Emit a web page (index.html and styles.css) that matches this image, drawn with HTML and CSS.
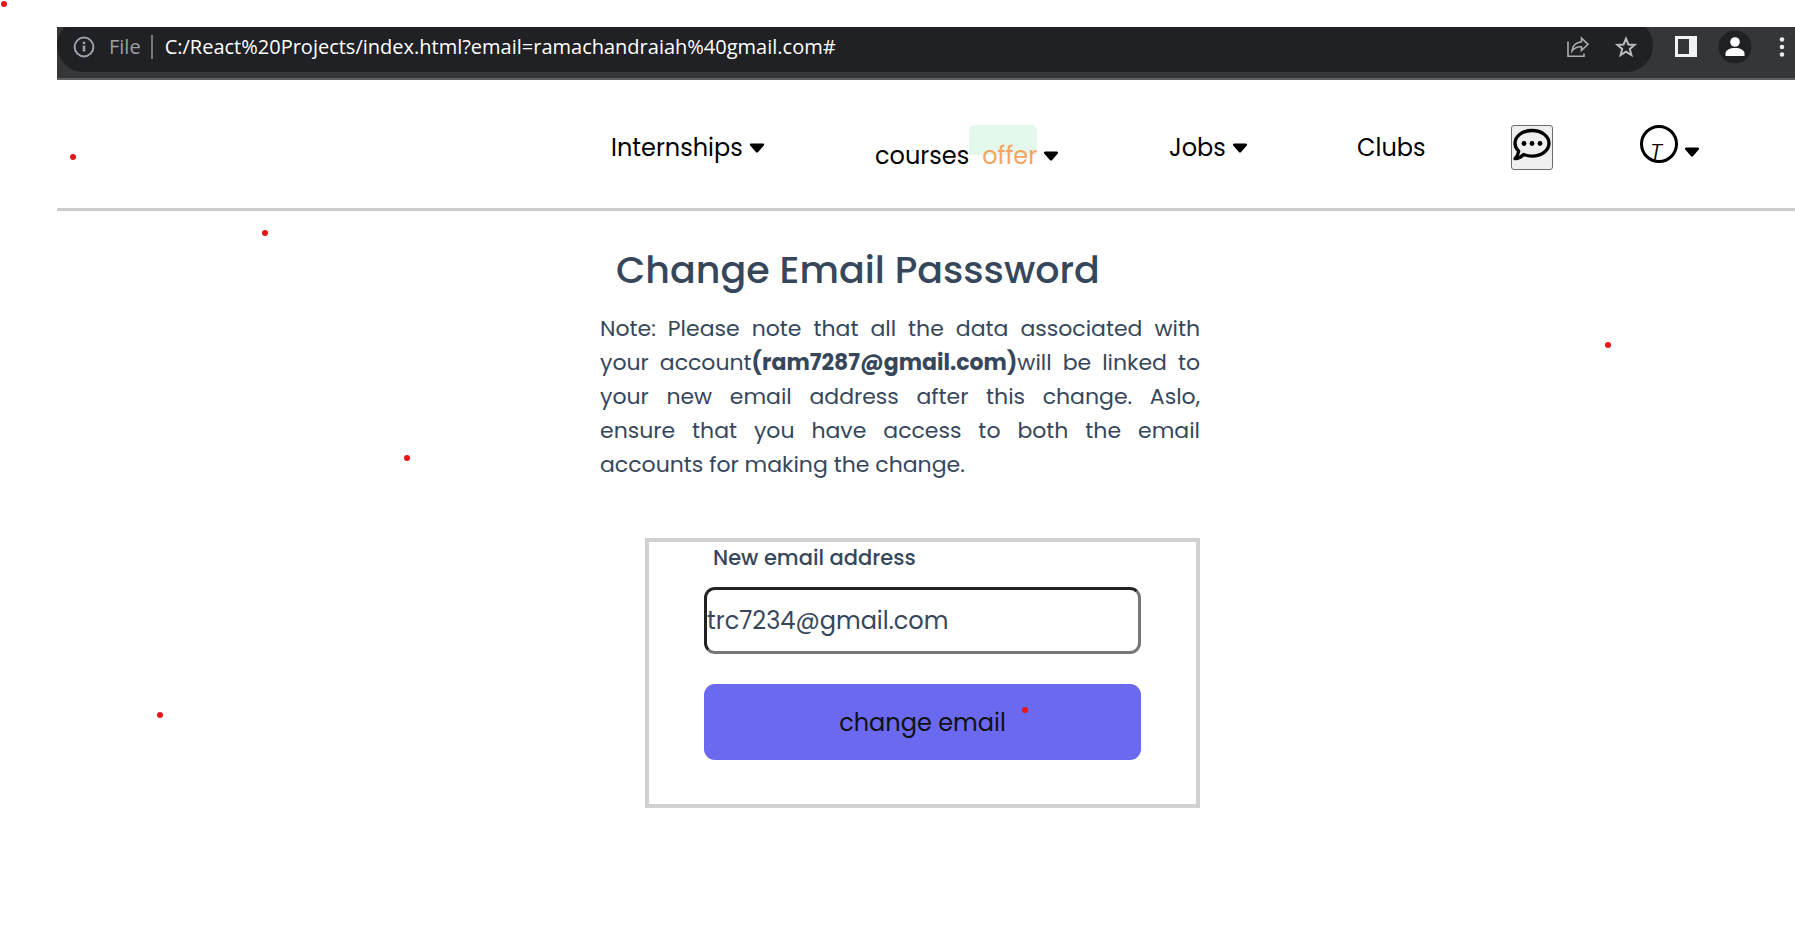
FILE: index.html
```html
<!DOCTYPE html>
<html lang="en">
<head>
<meta charset="utf-8">
<title>Change Email</title>
<link rel="stylesheet" href="styles.css">
</head>
<body>
<div class="window">
  <header class="browser-bar">
    <div class="address">
      <svg class="info" viewBox="0 0 22 22" width="22" height="22" fill="none" stroke="#9aa0a6" stroke-width="2"><circle cx="11" cy="11" r="9.4"/><path d="M11 9.6v6M11 5.8v2.2" stroke-width="2.6"/></svg>
      <span class="scheme">File</span>
      <span class="divider"></span>
      <span class="url">C:/React%20Projects/index.html?email=ramachandraiah%40gmail.com#</span>
      <div class="address-actions">
        <button type="button" class="icon-button" aria-label="Share"><svg viewBox="0 0 24 22" width="24" height="22" fill="none" stroke="#a9abad" stroke-width="1.6"><path d="M2 5.5V20.2H18V17.5"/><path d="M15.5 2.2L22 8.3l-6.500 6v-3.500c-4-.3-7 1-9.500 4.200.6-5 3.600-8.500 9.500-9.200z"/></svg></button>
        <button type="button" class="icon-button" aria-label="Bookmark"><svg viewBox="0 0 24 22" width="24" height="22" fill="none" stroke="#b9bbbd" stroke-width="2"><path d="M12 2.700l2.400 5.800 6.200.4-4.800 4 1.600 6.200L12 15.700l-5.400 3.400 1.600-6.200-4.800-4 6.200-.4z"/></svg></button>
      </div>
    </div>
    <div class="browser-actions">
      <button type="button" class="icon-button" aria-label="Side panel"><svg viewBox="0 0 22 21" width="22" height="21"><path fill="#f1f3f4" fill-rule="evenodd" d="M0 0h22v21H0zM3 3h11v15H3z"/></svg></button>
      <button type="button" class="icon-button" aria-label="Profile"><svg viewBox="0 0 34 34" width="34" height="34"><circle cx="17" cy="17" r="16.500" fill="#202124"/><circle cx="17" cy="12" r="4.800" fill="#fff"/><path fill="#fff" d="M7.500 26v-2.500c0-3.500 4.500-5.500 9.500-5.500s9.500 2 9.500 5.500V26z"/></svg></button>
      <button type="button" class="icon-button menu" aria-label="Menu"><svg viewBox="0 0 6 20" width="6" height="20" fill="#e8eaed"><circle cx="3" cy="2.500" r="2.300"/><circle cx="3" cy="10" r="2.300"/><circle cx="3" cy="17.500" r="2.300"/></svg></button>
    </div>
  </header>

  <nav class="site-nav">
    <a href="#">Internships <svg class="caret" viewBox="0 0 16 10" width="16" height="10"><path d="M2 .5h12q1.800.4.8 1.900L9.200 9q-1.200 1-2.400 0L1.200 2.400Q.2.900 2 .5z"/></svg></a>
    <a href="#" class="courses">courses <span class="offer">offer</span> <svg class="caret" viewBox="0 0 16 10" width="16" height="10"><path d="M2 .5h12q1.800.4.8 1.900L9.200 9q-1.200 1-2.400 0L1.200 2.400Q.2.900 2 .5z"/></svg></a>
    <a href="#">Jobs <svg class="caret" viewBox="0 0 16 10" width="16" height="10"><path d="M2 .5h12q1.800.4.8 1.900L9.200 9q-1.200 1-2.400 0L1.200 2.400Q.2.900 2 .5z"/></svg></a>
    <a href="#">Clubs</a>
    <button type="button" class="chat" aria-label="Messages"><svg viewBox="0 0 38 34" width="38" height="34"><path fill="none" stroke="#000" stroke-width="3.300" stroke-linejoin="round" d="M19 2.500c9.700 0 17 5.600 17 12.800S28.700 28.100 19 28.100c-3.200 0-6-.6-8.400-1.700C8.500 28.800 5.500 30.500 2 30.700c2-2 3.300-4.700 3.700-7.400C3.300 21 2 18.300 2 15.300 2 8.100 9.300 2.500 19 2.500z"/><circle cx="11" cy="15.500" r="2.400"/><circle cx="19" cy="15.500" r="2.400"/><circle cx="27" cy="15.500" r="2.400"/></svg></button>
    <a href="#" class="account"><span class="avatar">T</span><svg class="caret" viewBox="0 0 16 10" width="16" height="10"><path d="M2 .5h12q1.800.4.8 1.900L9.200 9q-1.200 1-2.400 0L1.200 2.400Q.2.900 2 .5z"/></svg></a>
  </nav>

  <main class="content">
    <h1>Change Email Passsword</h1>
    <p class="note">Note: Please note that all the data associated with your account<b>(ram7287@gmail.com)</b>will be linked to your new email address after this change. Aslo, ensure&nbsp;that you have access to both the email accounts&nbsp;for making the change.</p>
    <form class="email-form">
      <label for="email">New email address</label>
      <input id="email" type="text" value="trc7234@gmail.com">
      <button type="button" class="submit">change email</button>
    </form>
  </main>
</div>
<span class="dot dot-1"></span>
<span class="dot dot-2"></span>
<span class="dot dot-3"></span>
<span class="dot dot-4"></span>
<span class="dot dot-5"></span>
<span class="dot dot-6"></span>
<span class="dot dot-7"></span>
</body>
</html>
```
FILE: styles.css
```css
* { box-sizing: border-box; }
body {
  margin: 0;
  background: #fff;
  color: #000;
  font-family: Poppins, Inter, "Open Sans", sans-serif;
}
.window { padding: 27px 0 0 57px; }

.browser-bar {
  display: flex;
  height: 53px;
  background: #35363a;
  border-bottom: 2px solid #5f6063;
  overflow: hidden;
}
.address {
  flex: 1;
  display: flex;
  align-items: center;
  height: 53px;
  margin-top: -8px;
  padding: 2px 15px 0 16px;
  border-radius: 27px;
  background: #202124;
  color: #fff;
  font: 20px/28px "Open Sans", sans-serif;
}
.scheme { margin-left: 14px; color: #9aa0a6; }
.divider { width: 2px; height: 24px; margin: 0 12px 0 10px; background: #77797c; }
.url { white-space: nowrap; }
.address-actions { display: flex; gap: 24px; margin-left: auto; }
.browser-actions {
  display: flex;
  align-items: flex-start;
  gap: 21px;
  padding: 3px 10px 0 22px;
}
.browser-actions .icon-button { height: 33px; }
.browser-actions .menu { margin-left: 6px; }
.icon-button {
  display: flex;
  align-items: center;
  padding: 0;
  border: 0;
  background: none;
}

.site-nav {
  display: grid;
  grid-template-columns: 264fr 294fr 188fr 154fr 129fr 155fr;
  align-items: start;
  height: 131px;
  padding: 45px 0 0 554px;
  border-bottom: 3px solid #ccc;
}
.site-nav a {
  color: #000;
  font-size: 24px;
  font-weight: 400;
  line-height: 46px;
  white-space: nowrap;
  text-decoration: none;
}
.caret { vertical-align: 3px; }
.courses { display: flex; align-items: center; gap: 6px; }
.site-nav .courses { line-height: 62px; }
.offer {
  margin-left: -6px;
  padding-left: 13px;
  background: linear-gradient(#e5f8ec, #e5f8ec) 0 0 / 100% 30px no-repeat;
  border-radius: 6px;
  color: #f4a460;
}
.chat {
  display: flex;
  justify-content: center;
  width: 42px;
  height: 45px;
  padding: 2px 0;
  border: 1px solid #6b6b6b;
  border-radius: 3px;
  background: #efefef;
}
.account { display: flex; align-items: center; gap: 6px; }
.avatar {
  width: 38px;
  height: 38px;
  padding: 8px 6px 0 0;
  border: 3px solid #000;
  border-radius: 50%;
  font-style: italic;
  font-weight: 300;
  line-height: 32px;
  text-align: center;
}
.account .caret { margin-top: 15px; }

.content {
  width: 600px;
  margin-left: 543px;
  color: #36475b;
}
h1 {
  margin: 0;
  padding: 31px 0 0 16px;
  font-size: 38px;
  font-weight: 500;
  line-height: 56px;
  white-space: nowrap;
}
.note {
  margin: 14px 0 0;
  font-size: 22px;
  font-weight: 400;
  line-height: 34px;
  text-align: justify;
}
.note b { font-weight: 700; }
.email-form {
  display: flex;
  flex-direction: column;
  margin: 56px 0 0 45px;
  padding: 0 55px 44px;
  border: 4px solid #d0d2d0;
}
.email-form label {
  padding-left: 9px;
  font-size: 21px;
  font-weight: 500;
  line-height: 32px;
}
.email-form input {
  height: 67px;
  margin-top: 13px;
  padding: 0;
  border: 3px solid;
  border-color: #222 #767676 #767676 #222;
  border-radius: 11px;
  color: #36475b;
  font: 400 24px/36px Poppins, Inter, sans-serif;
}
.submit {
  height: 76px;
  margin-top: 30px;
  padding-top: 3px;
  border: 0;
  border-radius: 11px;
  background: #6a69f0;
  color: #111;
  font: 400 24px/36px Poppins, Inter, sans-serif;
}

.dot {
  position: absolute;
  width: 6px;
  height: 6px;
  border-radius: 50%;
  background: #e81717;
}
.dot-1 { left: 1px; top: 1px; }
.dot-2 { left: 70px; top: 154px; }
.dot-3 { left: 262px; top: 230px; }
.dot-4 { left: 404px; top: 455px; }
.dot-5 { left: 157px; top: 712px; }
.dot-6 { left: 1605px; top: 342px; }
.dot-7 { left: 1022px; top: 707px; }
```
